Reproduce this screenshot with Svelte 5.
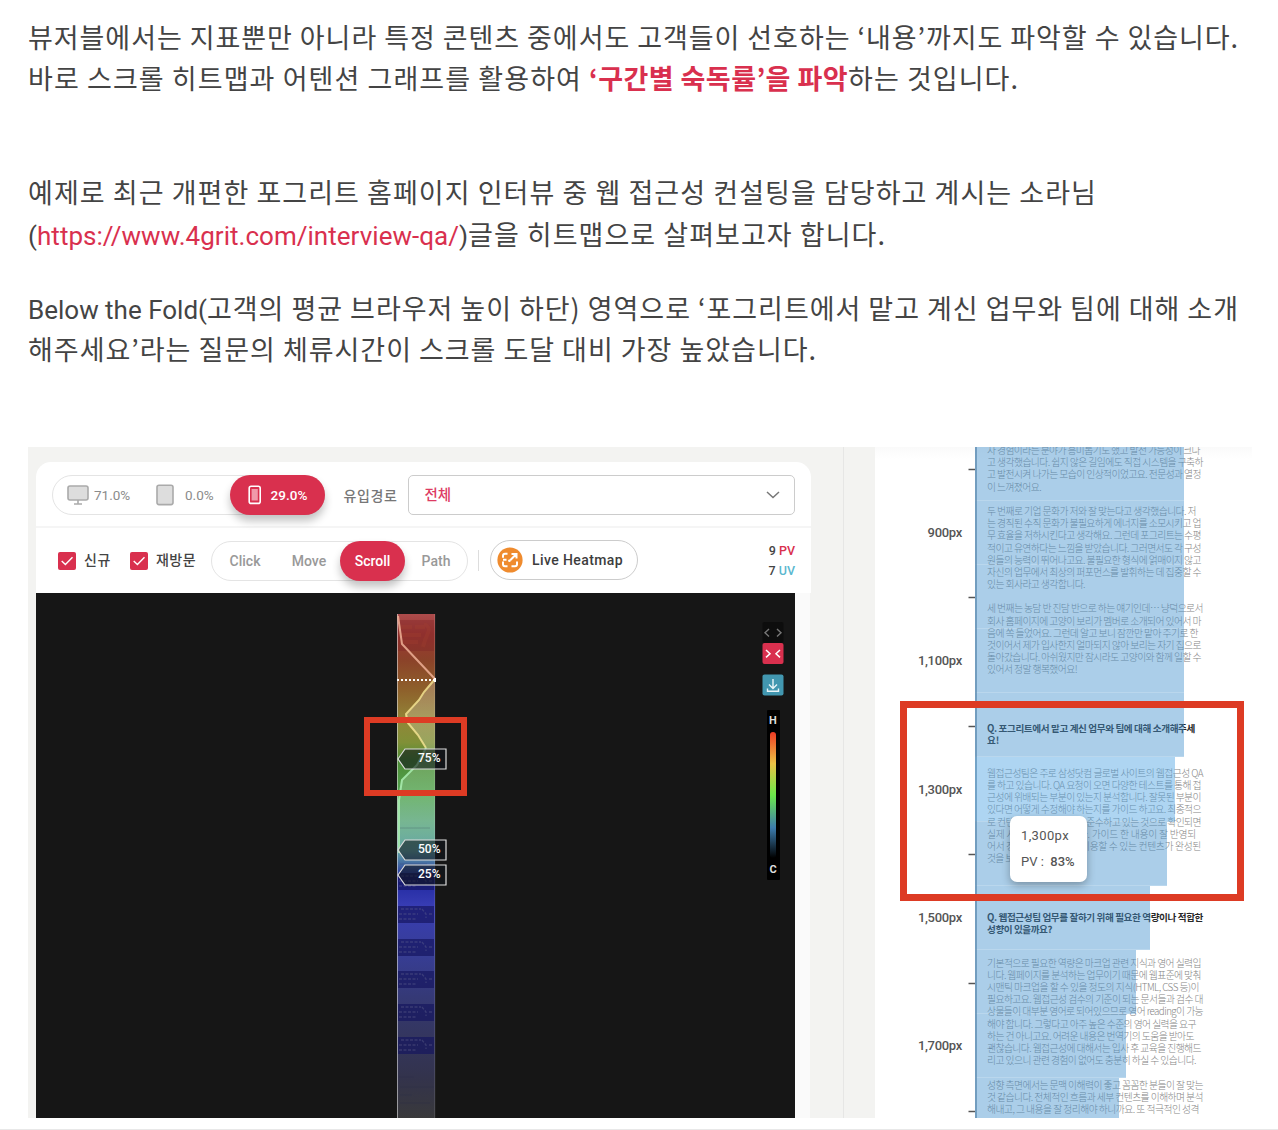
<script>
  // Spreads the letters of a single line so that it fills the given width.
  function fit(node, width) {
    const natural = node.getBoundingClientRect().width;
    const count = [...node.textContent].length;
    node.style.letterSpacing = `${(width - natural) / count}px`;
  }

  const device = [
    { kind: 'desktop', value: '71.0%' },
    { kind: 'tablet', value: '0.0%' },
    { kind: 'mobile', value: '29.0%' }
  ];
  const modes = ['Click', 'Move', 'Scroll', 'Path'];

  const tags = [
    { y: 156, label: '75%' },
    { y: 247, label: '50%' },
    { y: 272, label: '25%' }
  ];
  const thumbs = [280, 313, 346, 378, 411, 444];

  const bars = [
    { w: 209, h: 54 },
    { w: 209, h: 64 },
    { w: 209, h: 64 },
    { w: 209, h: 64 },
    { w: 209, h: 64 },
    { w: 199.5, h: 65, light: true },
    { w: 192, h: 64 },
    { w: 175, h: 64 },
    { w: 161, h: 64 },
    { w: 151, h: 64 },
    { w: 144, h: 41 }
  ];
  const scale = ['900px', '1,100px', '1,300px', '1,500px', '1,700px'];
  const ticks = [22, 150, 279, 407, 536, 664];

  const article = [
    { gap: 0, lines: [
      ['자 경험이라는 분야가 흥미롭기도 했고 발전 가능성이 크다', 213],
      ['고 생각했습니다. 쉽지 않은 길임에도 직접 시스템을 구축하', 216],
      ['고 발전시켜 나가는 모습이 인상적이었고요. 전문성과 열정', 214],
      ['이 느껴졌어요.', 54]
    ] },
    { gap: 12.2, lines: [
      ['두 번째로 기업 문화가 저와 잘 맞는다고 생각했습니다. 저', 209],
      ['는 경직된 수직 문화가 불필요하게 에너지를 소모시키고 업', 214],
      ['무 효율을 저하시킨다고 생각해요. 그런데 포그리트는 수평', 214],
      ['적이고 유연하다는 느낌을 받았습니다. 그러면서도 각 구성', 214],
      ['원들의 능력이 뛰어나고요. 불필요한 형식에 얽매이지 않고', 214],
      ['자신의 업무에서 최상의 퍼포먼스를 발휘하는 데 집중할 수', 214],
      ['있는 회사라고 생각합니다.', 98]
    ] },
    { gap: 12.2, lines: [
      ['세 번째는 농담 반 진담 반으로 하는 얘기인데… 냥덕으로서', 216],
      ['회사 홈페이지에 고양이 보리가 멤버로 소개되어 있어서 마', 214],
      ['음에 쏙 들었어요. 그런데 알고 보니 잠깐만 맡아 주기로 한', 211],
      ['것이어서 제가 입사한지 얼마되지 않아 보리는 자기 집으로', 214],
      ['돌아갔습니다. 아쉬웠지만 잠시라도 고양이와 함께 일할 수', 214],
      ['있어서 정말 행복했어요!', 90]
    ] },
    { gap: 46.3, bold: true, lines: [
      ['Q. 포그리트에서 맡고 계신 업무와 팀에 대해 소개해주세', 208],
      ['요!', 12]
    ] },
    { gap: 20.6, lines: [
      ['웹접근성팀은 주로 삼성닷컴 글로벌 사이트의 웹접근성 QA', 216],
      ['를 하고 있습니다. QA 요청이 오면 다양한 테스트를 통해 접', 214],
      ['근성에 위배되는 부분이 있는지 분석합니다. 잘못된 부분이', 214],
      ['있다면 어떻게 수정해야 하는지를 가이드 하고요. 최종적으', 214],
      ['로 컨텐츠가 접근성을 모두 준수하고 있는 것으로 확인되면', 214],
      ['실제 사이트에 적용됩니다. 가이드 한 내용이 잘 반영되', 209],
      ['어서 장애가 있는 분들도 이용할 수 있는 컨텐츠가 완성된', 214],
      ['것을 보면 뿌듯합니다.', 80]
    ] },
    { gap: 46.9, bold: true, lines: [
      ['Q. 웹접근성팀 업무를 잘하기 위해 필요한 역량이나 적합한', 216],
      ['성향이 있을까요?', 65]
    ] },
    { gap: 21.1, lines: [
      ['기본적으로 필요한 역량은 마크업 관련 지식과 영어 실력입', 214],
      ['니다. 웹페이지를 분석하는 업무이기 때문에 웹표준에 맞춰', 214],
      ['시맨틱 마크업을 할 수 있을 정도의 지식(HTML, CSS 등)이', 212],
      ['필요하고요. 웹접근성 검수의 기준이 되는 문서들과 검수 대', 216],
      ['상물들이 대부분 영어로 되어있으므로 영어 reading이 가능', 216],
      ['해야 합니다. 그렇다고 아주 높은 수준의 영어 실력을 요구', 209],
      ['하는 건 아니고요. 어려운 내용은 번역기의 도움을 받아도', 207],
      ['괜찮습니다. 웹접근성에 대해서는 입사 후 교육을 진행해드', 214],
      ['리고 있으니 관련 경험이 없어도 충분히 하실 수 있습니다.', 209]
    ] },
    { gap: 12.2, lines: [
      ['성향 측면에서는 문맥 이해력이 좋고 꼼꼼한 분들이 잘 맞는', 216],
      ['것 같습니다. 전체적인 흐름과 세부 컨텐츠를 이해하며 분석', 216],
      ['해내고, 그 내용을 잘 정리해야 하니까요. 또 적극적인 성격', 212]
    ] }
  ];
</script>

<main>
  <section class="copy">
    <p><span use:fit={1211}>뷰저블에서는 지표뿐만 아니라 특정 콘텐츠 중에서도 고객들이 선호하는 ‘내용’까지도 파악할 수 있습니다.</span></p>
    <p><span use:fit={554}>바로 스크롤 히트맵과 어텐션 그래프를 활용하여</span><b class="strong" use:fit={259}>‘구간별 숙독률’을 파악</b><span use:fit={171}>하는 것입니다.</span></p>
    <p class="gap-a"><span use:fit={1069}>예제로 최근 개편한 포그리트 홈페이지 인터뷰 중 웹 접근성 컨설팅을 담당하고 계시는 소라님</span></p>
    <p class="gap-b"><span class="latin" use:fit={9}>(</span><a class="latin" href="#interview" use:fit={422}>https://www.4grit.com/interview-qa/</a><span class="latin" use:fit={9}>)</span><span use:fit={418}>글을 히트맵으로 살펴보고자 합니다.</span></p>
    <p class="gap-c"><span class="latin" use:fit={179}>Below the Fold(</span><span use:fit={1032}>고객의 평균 브라우저 높이 하단) 영역으로 ‘포그리트에서 맡고 계신 업무와 팀에 대해 소개</span></p>
    <p><span use:fit={789}>해주세요’라는 질문의 체류시간이 스크롤 도달 대비 가장 높았습니다.</span></p>
  </section>

  <figure>
    <div class="left">
      <div class="panel">
        <div class="row first">
          <div class="devices">
            {#each device as d}
              <div class="device {d.kind}">
                {#if d.kind === 'desktop'}
                  <svg width="22" height="20" viewBox="0 0 22 20"><rect x="1" y="1" width="20" height="14" rx="2" fill="#ddd" stroke="#aaa" stroke-width="1.6" /><path d="M11 15v3.5M7 19h8" stroke="#aaa" stroke-width="1.6" /></svg>
                {:else if d.kind === 'tablet'}
                  <svg width="18" height="22" viewBox="0 0 18 22"><rect x="1" y="1.2" width="16" height="19.4" rx="2" fill="#ddd" stroke="#aaa" stroke-width="1.6" /></svg>
                {:else}
                  <svg width="14" height="20" viewBox="0 0 14 20"><rect x="1.2" y="1.2" width="11" height="17.2" rx="2" fill="none" stroke="#fff" stroke-width="1.6" /><rect x="3.6" y="4" width="6.2" height="11.5" fill="#f09aaa" /></svg>
                {/if}
                <span>{d.value}</span>
              </div>
            {/each}
          </div>
          <span class="path-label"><span use:fit={54}>유입경로</span></span>
          <div class="select">
            <span>전체</span>
            <svg width="14" height="8" viewBox="0 0 14 8"><path d="M1 1l6 5.5L13 1" fill="none" stroke="#777" stroke-width="1.5" /></svg>
          </div>
        </div>
        <div class="row second">
          <div class="check one">
            <svg width="18" height="18" viewBox="0 0 18 18"><rect width="18" height="18" rx="2" fill="#d9304e" /><path d="M3.7 9l3.7 3.6 7.1-7.3" fill="none" stroke="#fff" stroke-width="1.4" /></svg>
            <span use:fit={27}>신규</span>
          </div>
          <div class="check two">
            <svg width="18" height="18" viewBox="0 0 18 18"><rect width="18" height="18" rx="2" fill="#d9304e" /><path d="M3.7 9l3.7 3.6 7.1-7.3" fill="none" stroke="#fff" stroke-width="1.4" /></svg>
            <span use:fit={40}>재방문</span>
          </div>
          <div class="modes">
            {#each modes as m}
              <span class="mode {m.toLowerCase()}">{m}</span>
            {/each}
          </div>
          <i class="divider"></i>
          <div class="live">
            <svg width="26" height="26" viewBox="0 0 26 26"><circle cx="13" cy="13" r="12.6" fill="#ef8b2e" /><path d="M10.5 6.7H8a2 2 0 0 0-2 2v2.1M6 14.5v2.8a2 2 0 0 0 2 2h2.5M14.5 19.3H18a2 2 0 0 0 2-2v-2.8M6 12.7h3.5M14.5 7h5v4.6M19.2 7.3l-6 6" fill="none" stroke="#fff" stroke-width="2" /><circle cx="12.4" cy="13.8" r="1.3" fill="#fff" /></svg>
            <span use:fit={91}>Live Heatmap</span>
          </div>
          <div class="counts">
            <span>9 <b class="pv">PV</b></span>
            <span>7 <b class="uv">UV</b></span>
          </div>
        </div>
      </div>

      <div class="stage">
        <svg class="strip" width="110" height="525" viewBox="0 0 110 525">
          <defs>
            <linearGradient id="heat" gradientUnits="userSpaceOnUse" x1="0" y1="21" x2="0" y2="525">
              <stop offset="0" stop-color="#ad4c4c" />
              <stop offset=".04" stop-color="#9c3733" />
              <stop offset=".09" stop-color="#8b4229" />
              <stop offset=".15" stop-color="#8e602b" />
              <stop offset=".21" stop-color="#928538" />
              <stop offset=".255" stop-color="#809037" />
              <stop offset=".29" stop-color="#4d8c35" />
              <stop offset=".36" stop-color="#54a653" />
              <stop offset=".42" stop-color="#5da782" />
              <stop offset=".47" stop-color="#5da2a3" />
              <stop offset=".5" stop-color="#3f62a4" />
              <stop offset=".525" stop-color="#2028a0" />
              <stop offset=".58" stop-color="#383db4" />
              <stop offset=".68" stop-color="#373d93" />
              <stop offset=".8" stop-color="#343768" />
              <stop offset=".92" stop-color="#33334c" />
              <stop offset="1" stop-color="#39393b" />
            </linearGradient>
            <linearGradient id="veil" gradientUnits="userSpaceOnUse" x1="0" y1="58" x2="0" y2="270">
              <stop offset="0" stop-color="#fff" stop-opacity=".22" />
              <stop offset=".8" stop-color="#fff" stop-opacity=".17" />
              <stop offset="1" stop-color="#fff" stop-opacity="0" />
            </linearGradient>
          </defs>
          <rect x="33" y="21" width="38" height="504" fill="url(#heat)" />
          <rect x="34" y="27" width="36" height="31" fill="#7c2525" opacity=".4" />
          <path d="M35 34h13m3 0h10M35 42h22M36 49h18M60 31q7 3 4 9t-5 14" stroke="#a8422e" stroke-width="4" opacity=".25" fill="none" />
          <path d="M45 58H71V86L55 107L41 123L44 130L54 142L62 155L53 172L37 187L34 207V270H71V58Z" fill="url(#veil)" />
          {#each thumbs as y}
            <g>
              <rect x="34" y={y} width="36" height="17" fill="#14145f" opacity=".68" />
              <path d="M37 {y + 3}h20M35 {y + 8}h19M35 {y + 13}h18M58 {y + 3}l4 5v4M65 {y + 8}h3" stroke="#77799a" stroke-width="1.3" stroke-dasharray="3 1.5" fill="none" opacity=".3" />
            </g>
          {/each}
          <path d="M36 235h30M36 271h27M35 484h15M36 494h34M36 502h12M36 510h30" stroke="#222447" opacity=".2" />
          <path d="M33.5 21V525" stroke="#ddd" stroke-width="1" opacity=".6" />
          <path d="M70.8 21V525" stroke="#fff" stroke-width=".7" opacity=".2" />
          <path d="M34 23L38 51L71 86" fill="none" stroke="#eeb097" stroke-opacity=".85" stroke-width="2" />
          <path d="M71 86L60 99L55 107L42 121L44 130L54 142L62 155" fill="none" stroke="#f3e392" stroke-opacity=".85" stroke-width="2" />
          <path d="M62 155L53 172L38 187L35 207V260" fill="none" stroke="#a9eeb0" stroke-opacity=".85" stroke-width="2" />
          <path d="M33 87H71" stroke="#fff" stroke-width="2" stroke-dasharray="2 2" />
          <rect x="70" y="85" width="2" height="4" fill="#fff" />
          {#each tags as t}
            <path d="M34 {t.y + 10}L41 {t.y}H82V{t.y + 20}H41Z" fill="#10151b" fill-opacity=".58" stroke="#ddd" stroke-width="1.2" />
            <text x="76.5" y={t.y + 13.3} text-anchor="end">{t.label}</text>
          {/each}
        </svg>
        <div class="tools">
          <svg width="22" height="74" viewBox="0 0 22 74" class="buttons">
            <rect x=".5" y="0" width="21" height="21" rx="2" fill="#0d0d0d" />
            <path d="M7 7l-4 3.7L7 14.4M15 7l4 3.7-4 3.7" fill="none" stroke="#777" stroke-width="1.4" />
            <rect x=".5" y="21" width="21" height="21" rx="2" fill="#d9304e" />
            <path d="M4 28l4 3.7-4 3.7M18 28l-4 3.7 4 3.7" fill="none" stroke="#fff" stroke-width="1.5" />
            <rect x=".5" y="52.5" width="21" height="21" rx="2" fill="#4297b0" />
            <path d="M11 57v9M7 62.6l4 4 4-4M5.5 66.5v2.7h11v-2.7" fill="none" stroke="#e9f5f8" stroke-width="1.4" />
          </svg>
          <div class="legend"><b>H</b><i></i><b>C</b></div>
        </div>
        <i class="mark small"></i>
      </div>
    </div>

    <div class="rail"></div>

    <div class="chart">
      <div class="labels">
        {#each scale as s}<span>{s}</span>{/each}
      </div>
      <svg class="axis" width="10" height="671" viewBox="0 0 10 671">
        <path d="M9 0V671" stroke="#74899a" stroke-width="1.5" />
        {#each ticks as t}<path d="M1.5 {t + .5}H8" stroke="#555" stroke-width="1.5" />{/each}
      </svg>
      <div class="plot">
        <div class="article">
          {#each article as g}
            <div class="group" class:bold={g.bold} style:margin-top="{g.gap}px">
              {#each g.lines as l}
                <div class="line"><span use:fit={l[1]}>{l[0]}</span></div>
              {/each}
            </div>
          {/each}
        </div>
        <div class="bars">
          {#each bars as b}
            <div class="bar" class:light={b.light} style:width="{b.w}px" style:height="{b.h}px"></div>
          {/each}
        </div>
      </div>
      <i class="mark large"></i>
      <div class="tip">
        <span use:fit={48}>1,300px</span>
        <span>PV :&nbsp; <b>83%</b></span>
      </div>
    </div>
  </figure>
  <hr />
</main>

<style>
  :global(body) { margin: 0; background: #fff; }
  main {
    box-sizing: border-box;
    width: 1278px;
    height: 1130px;
    overflow: hidden;
    font-family: Roboto, "Noto Sans CJK KR", sans-serif;
    color: #444;
  }
  .copy {
    box-sizing: border-box;
    height: 447px;
    padding: 16px 0 0 28px;
    font: 400 27px/41px "Noto Sans CJK KR", sans-serif;
  }
  .copy p { margin: 0; height: 41px; display: flex; align-items: baseline; white-space: nowrap; }
  .copy .gap-a { margin-top: 73px; }
  .copy .gap-b { margin-top: 1px; }
  .copy .gap-c { margin-top: 33px; }
  .copy .latin { font-family: Roboto, sans-serif; font-size: 26px; }
  .copy a { color: #d9304e; text-decoration: none; }
  .copy .strong { color: #d9304e; font-weight: 700; margin-left: 7px; }

  figure {
    margin: 0 0 0 28px;
    width: 1224px;
    height: 671px;
    display: flex;
    overflow: hidden;
    background: #f3f3f1;
  }
  .left { box-sizing: border-box; width: 815px; padding: 15px 32px 0 8px; flex: none; }
  .panel { height: 131px; background: #fff; border-radius: 15px 15px 0 0; }
  .row { display: flex; align-items: center; box-sizing: border-box; font-size: 14px; white-space: nowrap; }
  .first { height: 66px; padding: 1px 16px 0; border-bottom: 2px solid #f5f5f5; }
  .second { height: 65px; padding: 0 16px 0 22px; }
  .devices {
    display: flex; align-items: center; box-sizing: border-box;
    width: 273px; height: 40px; border: 1px solid #e4e4e4; border-radius: 20px;
    color: #8b8b8b; font-size: 13.5px;
  }
  .device { display: flex; align-items: center; }
  .desktop { width: 87px; padding-left: 14px; gap: 5px; }
  .tablet { flex: 1; padding-left: 2px; gap: 11px; }
  .mobile {
    box-sizing: border-box; width: 95px; height: 40px; padding-left: 18px; gap: 9px; margin-right: -1px;
    border-radius: 20px; background: #d9304e; color: #fff; font-weight: 500;
    box-shadow: 0 6px 9px rgba(0, 0, 0, .24);
  }
  .path-label { width: 64px; margin-left: 19px; font-size: 14px; color: #777; font-weight: 500; }
  .select {
    box-sizing: border-box; width: 388px; height: 40px; padding: 0 14px 0 16px;
    display: flex; align-items: center; justify-content: space-between;
    border: 1.5px solid #ccc; border-radius: 5px; color: #dd3b63; font-weight: 500; font-size: 14.5px;
  }
  .select span { margin-top: -2px; }
  .check { display: flex; align-items: center; gap: 8px; color: #444; font-weight: 500; }
  .check span { margin-top: -3px; }
  .check.one { width: 72px; }
  .check.two { width: 81px; }
  .modes {
    box-sizing: border-box; width: 257px; height: 40px; display: flex; align-items: center;
    border: 1px solid #e4e4e4; border-radius: 20px; color: #999;
  }
  .mode { text-align: center; font-weight: 500; }
  .mode.click { width: 66px; }
  .mode.move { width: 62px; }
  .mode.scroll {
    width: 65px; height: 40px; line-height: 40px; border-radius: 20px; color: #fff;
    background: #d9304e; box-shadow: 0 6px 9px rgba(0, 0, 0, .24);
  }
  .mode.path { width: 62px; }
  .divider { width: 1px; height: 21px; margin: 0 11px 0 10px; background: #ddd; }
  .live {
    box-sizing: border-box; width: 148px; height: 40px; padding-left: 6px; gap: 9px; margin-top: -2px;
    display: flex; align-items: center; border: 1.5px solid #ccc; border-radius: 20px;
    color: #3d3d3d; font-weight: 500;
  }
  .counts { flex: 1; display: flex; flex-direction: column; text-align: right; font-size: 12.5px; line-height: 20px; font-weight: 500; }
  .counts b { font-weight: 500; }
  .pv { color: #d9304e; }
  .uv { color: #5bb8cf; }

  .stage {
    position: relative; display: flex; justify-content: space-between;
    width: 759px; height: 525px; background: #161616; border-right: 15px solid #fafafa;
  }
  .strip { margin-left: 328px; flex: none; }
  .strip text { font: 500 12px Roboto, sans-serif; fill: #fff; }
  .tools { width: 22px; margin-right: 11px; padding-top: 29px; display: flex; flex-direction: column; align-items: center; }
  .buttons { flex: none; }
  .legend {
    box-sizing: border-box; width: 13px; height: 170px; margin-top: 14px; padding: 4px 0;
    display: flex; flex-direction: column; align-items: center; background: #000;
    color: #ddd; font-size: 11px; line-height: 13px; border-radius: 1px;
  }
  .legend i {
    flex: 1; width: 6px; margin: 5px 0; border-radius: 3px;
    background: linear-gradient(#ee3a24, #eac144 25%, #6be84a 50%, #3c7cad 76%, #000);
  }
  .mark { position: absolute; box-sizing: border-box; border: 6.5px solid #dd3b24; }
  .mark.small { left: 328px; top: 124px; width: 103px; height: 79px; }
  .mark.large { left: 25px; top: 254px; width: 344px; height: 200px; border-width: 7px; }

  .rail { box-sizing: border-box; width: 32px; flex: none; border-left: 1px solid #e6e6e5; }
  .chart { position: relative; flex: 1; display: flex; background: linear-gradient(#fafafa, #fff 12px); }
  .labels {
    width: 87px; padding-top: 22px; flex: none; text-align: right;
    font-size: 13px; font-weight: 500; color: #555; letter-spacing: -.3px;
  }
  .labels span { display: block; height: 128.3px; line-height: 128px; }
  .axis { margin-left: 5px; width: 10px; flex: none; }
  .plot { display: grid; width: 270px; height: 671px; overflow: hidden; margin-left: -2px; }
  .article, .bars { grid-area: 1 / 1; }
  .article {
    margin-top: -3px; padding-left: 12px; white-space: nowrap;
    font: 300 9.8px/12.2px "Noto Sans CJK KR", sans-serif; color: #858585;
  }
  .line { height: 12.2px; }
  .line span { display: inline-block; }
  .bold { font-weight: 700; color: #282828; font-size: 9.6px; }
  .bar { box-sizing: border-box; background: rgba(68, 146, 206, .45) padding-box; border-bottom: 1px solid rgba(68, 146, 206, .37); }
  .bar.light { background-color: rgba(70, 160, 225, .44); }
  .tip {
    position: absolute; left: 135px; top: 369px; box-sizing: border-box; width: 77px; height: 66px;
    padding: 7px 0 0 11px; display: flex; flex-direction: column; align-items: flex-start;
    background: #fff; border-radius: 7px; box-shadow: 0 3px 9px rgba(0, 0, 0, .3);
    font-size: 13px; line-height: 26px; color: #555; white-space: nowrap;
  }
  .tip b { font-weight: 500; }
  hr { margin: 11px 0 0; border: 0; height: 1px; background: #e8e8e8; }
</style>
